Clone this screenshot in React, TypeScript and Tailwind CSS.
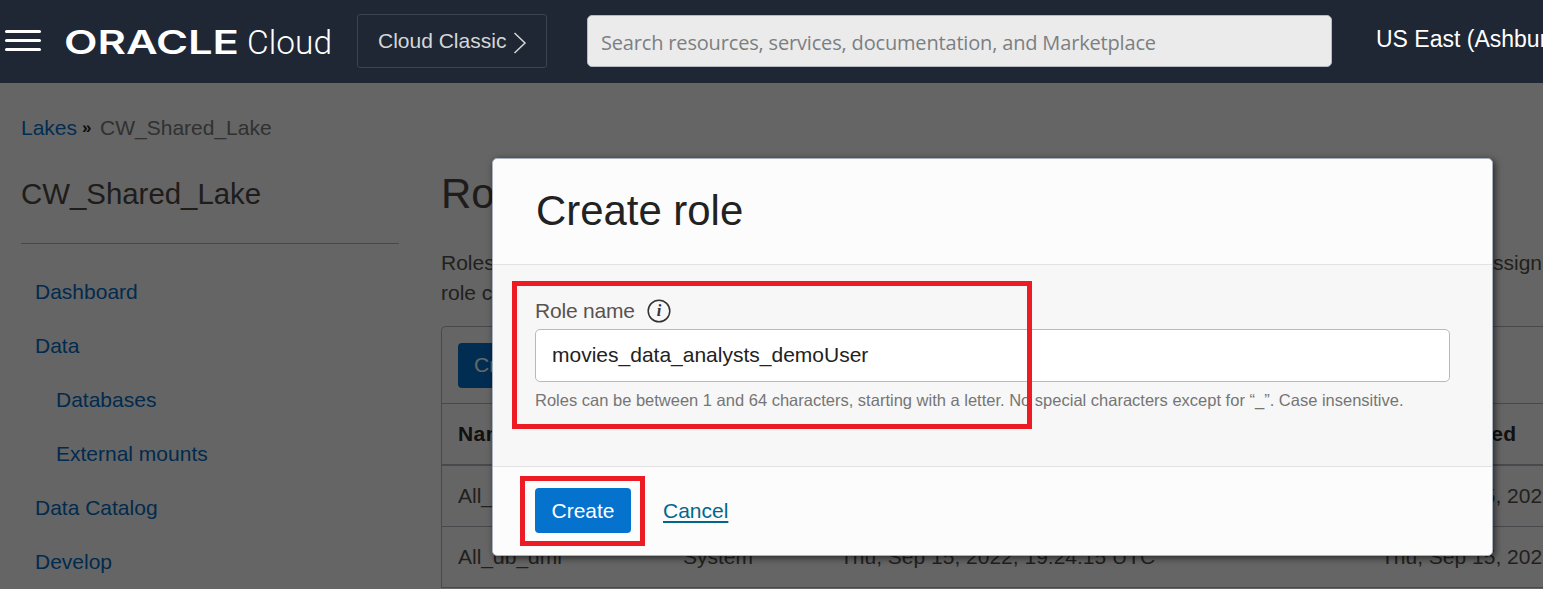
import type { ReactNode } from "react";

const navItems = [
  { label: "Dashboard", nested: false },
  { label: "Data", nested: false },
  { label: "Databases", nested: true },
  { label: "External mounts", nested: true },
  { label: "Data Catalog", nested: false },
  { label: "Develop", nested: false },
];

const roles = [
  { name: "All_db_ddl", type: "System", created: "Thu, Sep 15, 2022, 19:24:15 UTC", updated: "Thu, Sep 15, 2022" },
  { name: "All_db_dml", type: "System", created: "Thu, Sep 15, 2022, 19:24:15 UTC", updated: "Thu, Sep 15, 2022" },
];

function Header() {
  return (
    <header className="flex h-[83px] w-full shrink-0 items-start overflow-hidden bg-[#1e2733]">
      <button aria-label="Menu" className="mt-[30px] ml-[5px] flex w-9 shrink-0 flex-col gap-[6px]">
        <span className="h-[3px] rounded-full bg-white" />
        <span className="h-[3px] rounded-full bg-white" />
        <span className="h-[3px] rounded-full bg-white" />
      </button>
      <svg className="mt-[20px] ml-[23px] h-[44px] w-[270px] shrink-0" viewBox="0 0 270 44" fill="#fff">
        <text x="0" y="33.5" fontFamily="Inter, sans-serif" fontSize="32" fontWeight="600" textLength="175" lengthAdjust="spacingAndGlyphs">ORACLE</text>
        <text x="183" y="33.5" fontFamily="Roboto, sans-serif" fontSize="34" fontWeight="300" textLength="85" lengthAdjust="spacingAndGlyphs">Cloud</text>
      </svg>
      <button className="mt-[14px] ml-[23px] flex h-[54px] w-[190px] shrink-0 items-center rounded-[3px] border border-[#3a434f] pl-5 text-[21px] leading-none text-[#d5d6d8]">
        <span className="-mt-[2px] whitespace-nowrap">Cloud Classic</span>
        <svg className="mt-[3px] ml-[7px] h-[22px] w-[14px]" viewBox="0 0 14 22" fill="none" stroke="#d5d6d8" strokeWidth="1.5">
          <path d="M1.5 1 L12 11 L1.5 21" />
        </svg>
      </button>
      <div className="mt-[15px] ml-10 flex h-[52px] w-[745px] shrink-0 items-center rounded-[5px] border border-[#b5bbc3] bg-[#ebebeb] pl-[13px] pt-[4px] font-['Open_Sans','Noto_Sans',sans-serif] text-[20px] tracking-[-0.17px] whitespace-nowrap text-[#7c7f82]">
        Search resources, services, documentation, and Marketplace
      </div>
      <span className="mt-[25px] ml-11 shrink-0 text-[23px] leading-[28px] whitespace-nowrap text-white">US East (Ashburn)</span>
    </header>
  );
}

function Sidebar() {
  return (
    <aside className="w-[378px] shrink-0">
      <h2 className="h-[45px] text-[29.4px] leading-[40px] text-[#4d4944]">CW_Shared_Lake</h2>
      <hr className="mt-[24px] border-[#b4b4b4]" />
      <nav className="mt-[21px] flex flex-col">
        {navItems.map((item) => (
          <a key={item.label} className={item.nested ? "h-[54px] pl-[35px] leading-[54px] text-[#046bc4]" : "h-[54px] pl-[14px] leading-[54px] text-[#046bc4]"}>
            {item.label}
          </a>
        ))}
      </nav>
    </aside>
  );
}

function Row({ children, className }: { children: ReactNode; className: string }) {
  return <div className={`grid grid-cols-[225px_157px_541px_200px] items-center pl-4 whitespace-nowrap ${className}`}>{children}</div>;
}

function Content() {
  return (
    <section className="ml-[42px] w-[1127px] shrink-0">
      <h1 className="h-[74px] text-[42px] leading-[40px] text-[#4d4944]">Roles</h1>
      <div className="h-[78px] leading-[30px] text-[#56524d]">
        <div className="flex w-[1101px] justify-between">
          <span>Roles</span>
          <span>assign</span>
        </div>
        <div>role can</div>
      </div>
      <div className="rounded-tl-[5px] border-t border-l border-[#b4b7bd]">
        <div className="flex h-[77px] items-center border-b border-[#b4b7bd] pl-4">
          <button className="h-[45px] rounded-[4px] bg-[#0572ce] px-4 text-white">Create role</button>
        </div>
        <Row className="h-[62px] border-b-2 border-[#b4b7bd] font-bold tracking-[0.4px] text-[#2b2b2b]">
          <span>Name</span>
          <span>Type</span>
          <span>Created</span>
          <span>Last updated</span>
        </Row>
        {roles.map((role) => (
          <Row key={role.name} className="h-[61px] border-b border-[#b4b7bd] text-[#56524d]">
            <span>{role.name}</span>
            <span>{role.type}</span>
            <span>{role.created}</span>
            <span>{role.updated}</span>
          </Row>
        ))}
      </div>
    </section>
  );
}

function InfoIcon() {
  return (
    <svg className="h-6 w-6" viewBox="0 0 24 24" fill="none">
      <circle cx="12" cy="12" r="10.8" stroke="#333" strokeWidth="1.5" />
      <text x="12" y="17" textAnchor="middle" fill="#333" fontFamily="Liberation Serif, serif" fontSize="16.5" fontStyle="italic" fontWeight="700">i</text>
    </svg>
  );
}

function CreateRoleDialog() {
  return (
    <div role="dialog" aria-label="Create role" className="absolute top-[158px] left-[492px] flex h-[398px] w-[1001px] flex-col overflow-hidden rounded-[5px] border border-[#a9b2bd] bg-[#fcfcfc] shadow-[2px_2px_7px_rgba(0,0,0,0.6)]">
      <div className="h-[106px] border-b border-[#e3e3e3] pt-[27px] pl-[43px] text-[41.9px] leading-[50px] text-[#222]">Create role</div>
      <div className="h-[202px] border-b border-[#e3e3e3] bg-[#f7f7f7] px-[42px] pt-[33px]">
        <div className="flex h-[26px] items-center gap-3 text-[#57534f]">
          <span className="tracking-[-0.2px]">Role name</span>
          <InfoIcon />
        </div>
        <input readOnly value="movies_data_analysts_demoUser" className="mt-[5px] block h-[53px] w-full rounded-[5px] border border-[#b5bac2] bg-white px-4 pb-[2px] text-[#222] outline-none" />
        <p className="mt-[6px] text-[16.5px] leading-[24px] whitespace-nowrap text-[#757575]">
          Roles can be between 1 and 64 characters, starting with a letter. No special characters except for “_”. Case insensitive.
        </p>
      </div>
      <div className="flex flex-1 items-center gap-8 pb-px pl-[42px]">
        <button className="h-[45px] w-24 rounded-[4px] bg-[#0572ce] text-white">Create</button>
        <a className="leading-[24px] text-[#00688c] underline decoration-2 underline-offset-[3px]">Cancel</a>
      </div>
    </div>
  );
}

export default function App() {
  return (
    <div className="relative flex h-[589px] w-full flex-col overflow-hidden bg-[#1e2733] font-['Liberation_Sans',Arial,sans-serif] text-[21px]">
      <Header />
      <main className="relative flex-1 overflow-hidden bg-[#fcfcfc] pl-[21px]">
        <div className="flex h-[91px] items-start pt-[30px] leading-[30px]">
          <a className="text-[#0572ce]">Lakes</a>
          <span className="ml-[5px] w-[12px] text-[17px] font-bold text-[#222]">»</span>
          <span className="ml-[6px] text-[#7a7a7a]">CW_Shared_Lake</span>
        </div>
        <div className="flex">
          <Sidebar />
          <Content />
        </div>
        <div className="absolute inset-0 bg-black/60" />
      </main>
      <CreateRoleDialog />
      <div className="absolute top-[281px] left-[512px] h-[148px] w-[520px] border-5 border-[#ed1c24]" />
      <div className="absolute top-[476px] left-[520px] h-[70px] w-[125px] border-5 border-[#ed1c24]" />
    </div>
  );
}
